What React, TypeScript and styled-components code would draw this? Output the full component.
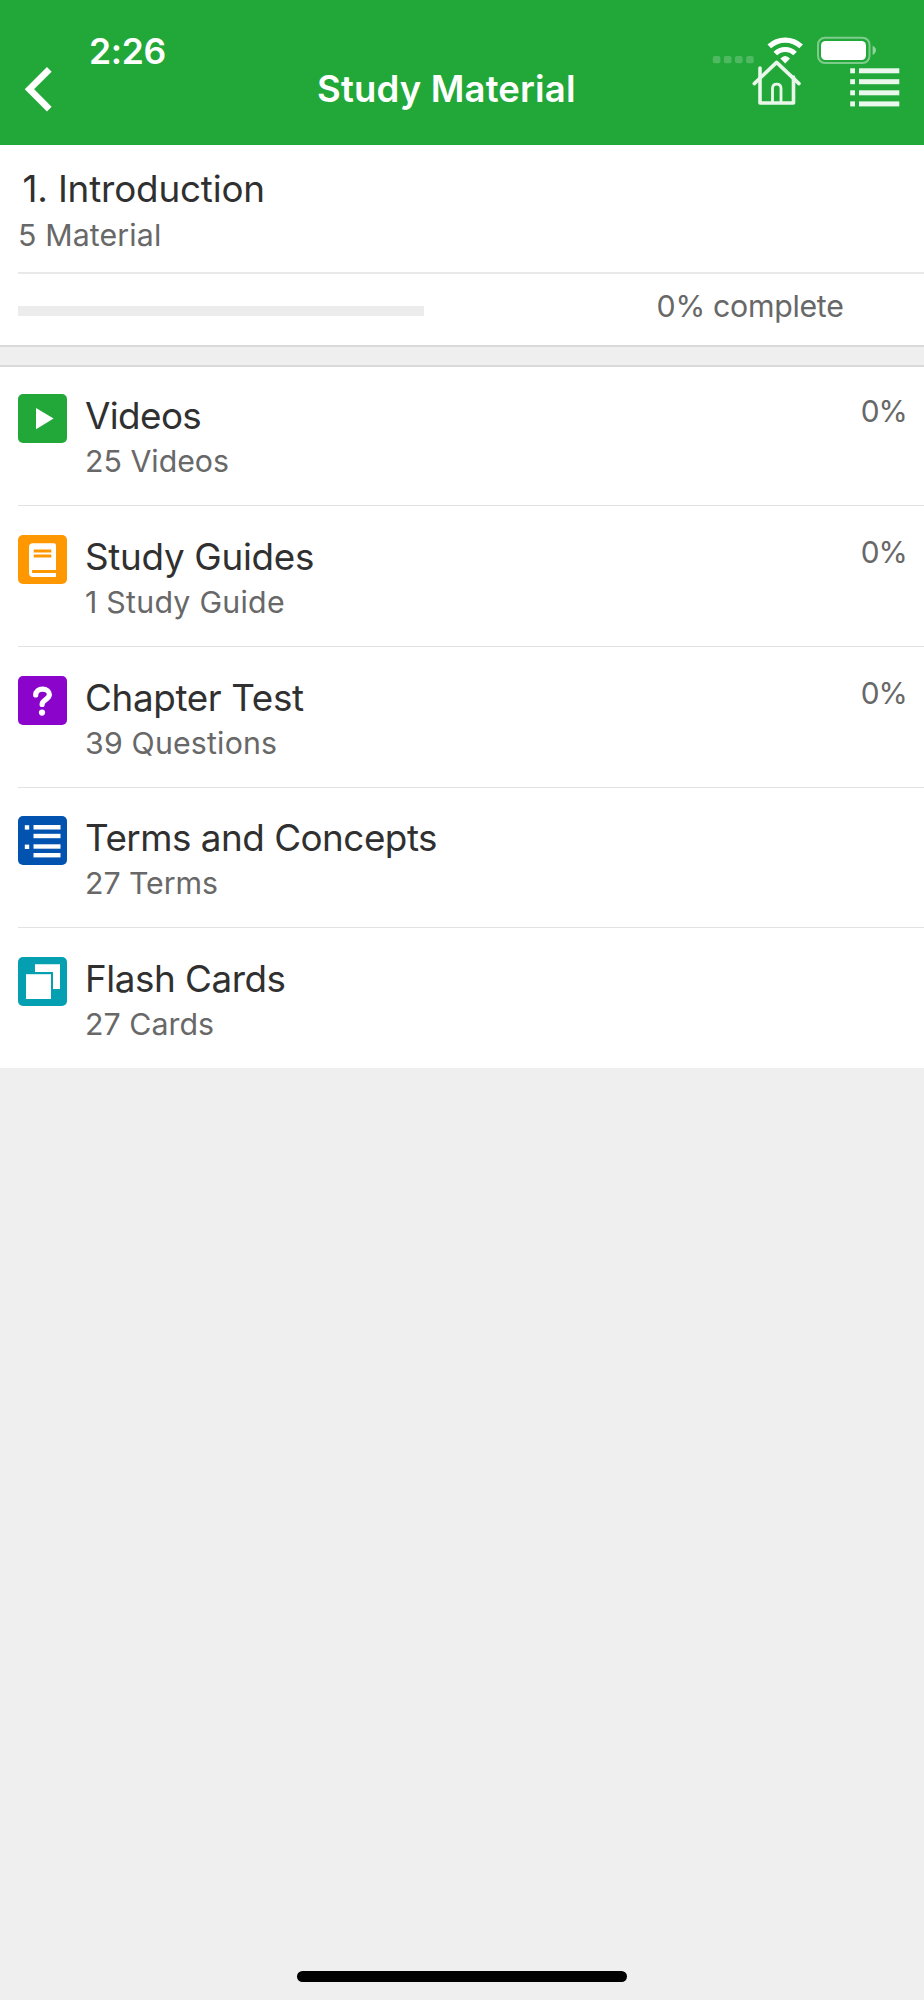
import React from 'react';
import styled, { createGlobalStyle } from 'styled-components';

const GlobalStyle = createGlobalStyle`
  *, *::before, *::after { box-sizing: border-box; }
  body {
    margin: 0;
    background: #efefef;
    font-family: Inter, 'Liberation Sans', sans-serif;
  }
`;

const Screen = styled.div`
  display: flex;
  flex-direction: column;
  width: 924px;
  height: 2000px;
  background: #efefef;
`;

const Header = styled.header`
  position: relative;
  flex: none;
  height: 144.8px;
  background: #22a839;
  color: #fff;
`;

const StatusBar = styled.div`
  position: absolute;
  top: 0;
  left: 0;
  right: 0;
  display: flex;
  justify-content: space-between;
  padding: 30px 46px 0 89px;
  pointer-events: none;
`;

const Clock = styled.span`
  margin-top: 0.6px;
  font-size: 35.5px;
  font-weight: 600;
  line-height: 41px;
  letter-spacing: -0.35px;
`;

const NavBar = styled.nav`
  display: flex;
  align-items: flex-start;
  height: 100%;
  padding: 56px 22px 0 22px;
`;

const NavButton = styled.button`
  display: block;
  padding: 0;
  border: 0;
  background: none;
  color: inherit;
`;

const NavTitle = styled.h1`
  flex: 1;
  margin: 11px 0 0 262px;
  font-size: 36.5px;
  font-weight: 600;
  line-height: 44px;
  letter-spacing: 0.16px;
  white-space: nowrap;
`;

const NavActions = styled.div`
  display: flex;
  gap: 46px;
`;

const Label = styled.div<{ $tracking?: number }>`
  white-space: nowrap;
  letter-spacing: ${({ $tracking = 0 }) => $tracking}px;
`;

const Title = styled(Label)`
  font-size: 36.8px;
  line-height: 44px;
  color: #303030;
`;

const Caption = styled(Label)`
  font-size: 30.3px;
  line-height: 38px;
  color: #686868;
`;

const Chapter = styled.section`
  flex: none;
  height: 202px;
  background: #fff;
  border-bottom: 2px solid #d9d9d9;
`;

const ChapterHeading = styled.div`
  height: 129.2px;
  margin-left: 18px;
  padding-top: 22px;
  border-bottom: 2px solid #e9e9e9;

  ${Title} { padding-left: 4.5px; }
  ${Caption} { margin-top: 5px; }
`;

const ProgressRow = styled.div`
  display: flex;
  align-items: flex-start;
  justify-content: space-between;
  padding: 13px 80.5px 0 18px;
`;

const ProgressTrack = styled.div`
  width: 406px;
  height: 10px;
  margin-top: 19px;
  background: #ececec;
`;

const MaterialList = styled.ul`
  flex: none;
  margin: 18px 0 0;
  padding: 0;
  list-style: none;
  background: #fff;
  border-top: 2px solid #d9d9d9;
`;

const MaterialRow = styled.li`
  display: flex;
  height: 140.6px;
  padding: 28.8px 17.5px 0 0;
  margin-left: 18px;

  &:first-child { height: 138.6px; padding-top: 27.3px; }
  & + & { border-top: 1px solid #e2e2e2; }
`;

const Badge = styled.svg`
  flex: none;
  width: 49px;
  height: 49px;
  border-radius: 5px;
`;

const MaterialText = styled.div`
  flex: 1;
  margin-left: 18px;

  ${Caption} { margin-top: 4px; }
`;

const Percent = styled(Caption)`
  margin-top: -1.8px;
  font-size: 29.8px;
`;

const HomeIndicator = styled.div`
  width: 330px;
  height: 11px;
  margin: auto auto 18px;
  border-radius: 6px;
  background: #000;
`;

const StatusIcons = () => (
  <svg width="168" height="40" viewBox="710 30 168 40" fill="#fff">
    <g opacity=".2">
      {[712.8, 723.9, 735, 746.1].map((x) => (
        <rect key={x} x={x} y="56" width="7.6" height="7.2" rx="2" />
      ))}
    </g>
    <g fill="none" stroke="#fff">
      <path d="M769.3 46.4A23.2 23.2 0 0 1 801.1 46.4" strokeWidth="5.3" />
      <path d="M775.3 53.6A14 14 0 0 1 795.1 53.6" strokeWidth="5" />
    </g>
    <path d="M785.2 63.6L780.4 58.6Q785.2 53.4 790 58.6Z" />
    <rect x="818" y="37.7" width="51.5" height="25.3" rx="7" fill="none" stroke="#fff" strokeWidth="2" opacity=".42" />
    <rect x="821" y="41" width="45" height="19" rx="4.5" />
    <path d="M872.6 45.5Q876 47.5 876 50.2Q876 53 872.6 55Z" opacity=".5" />
  </svg>
);

const BackIcon = () => (
  <svg width="33" height="58" viewBox="22 56 33 58" fill="none" stroke="#fff" strokeWidth="6.6">
    <path d="M49.3 69.3L29.4 89.2L49.3 109.1" />
  </svg>
);

const HomeIcon = () => (
  <svg width="52" height="52" viewBox="751 56 52 52" fill="none" stroke="#e9f7eb" strokeWidth="3.6" strokeLinejoin="round">
    <path d="M754.3 83.6L776.6 62.4L799 83.6" strokeLinecap="round" />
    <path d="M760 68V103H793.5V77" strokeLinecap="round" />
    <path d="M772.5 102V88.5Q772.5 84.2 776.7 84.2Q781 84.2 781 88.5V102" strokeWidth="2.8" />
  </svg>
);

const ListIcon = () => (
  <svg width="53" height="52" viewBox="849 56 53 52" fill="#ebf8ed">
    {[68.3, 79.2, 90.3, 101.4].map((y) => (
      <React.Fragment key={y}>
        <rect x="850.2" y={y} width="4.8" height="5" />
        <rect x="859" y={y} width="40.3" height="5" />
      </React.Fragment>
    ))}
  </svg>
);

const PlayGlyph = <path d="M18 14L35.6 24.6L18 35.3Z" fill="#fff" />;

const BookGlyph = (
  <>
    <path d="M38 10.5V35H14.2V38H38V42H15Q11 42 11 38V12Q11 8.3 15 8.3H36Q38 8.3 38 10.5Z" fill="#fff" />
    <path d="M38 35H14.2V36.2Q14.6 38 17 38H38Z" fill="#ff9800" />
    <rect x="15.7" y="14.5" width="17.6" height="3" fill="#ff9800" />
    <rect x="15.7" y="19.5" width="17.6" height="3" fill="#ff9800" />
  </>
);

const QuestionGlyph = (
  <>
    <path
      d="M17.7 19C17.7 15.4 20.6 13.2 24.5 13.2C28.6 13.2 31.4 15.4 31.4 18.6C31.4 23.4 24.1 23.8 24.1 28.4"
      fill="none"
      stroke="#fff"
      strokeWidth="5.2"
      strokeLinecap="round"
    />
    <circle cx="24" cy="36.6" r="3.1" fill="#fff" />
  </>
);

const TermsGlyph = (
  <g fill="#fff">
    <rect x="6.8" y="9.2" width="4.4" height="4.4" />
    <rect x="6.8" y="28.6" width="4.4" height="4.4" />
    <rect x="15.5" y="9" width="27" height="4.5" />
    <rect x="15.5" y="17.8" width="27" height="4.4" />
    <rect x="15.5" y="28.3" width="27" height="4.4" />
    <rect x="15.5" y="37" width="27" height="4.4" />
  </g>
);

const CardsGlyph = (
  <g fill="#fff">
    <path d="M17 7.3H42V32H35V15H17Z" />
    <rect x="8" y="17.2" width="25" height="24.8" />
  </g>
);

type Material = {
  title: string;
  titleTracking: number;
  caption: string;
  captionTracking: number;
  percent?: string;
  color: string;
  glyph: React.ReactNode;
};

const materials: Material[] = [
  { title: 'Videos', titleTracking: -0.6, caption: '25 Videos', captionTracking: 0, percent: '0%', color: '#22a839', glyph: PlayGlyph },
  { title: 'Study Guides', titleTracking: -0.3, caption: '1 Study Guide', captionTracking: 0.26, percent: '0%', color: '#ff9800', glyph: BookGlyph },
  { title: 'Chapter Test', titleTracking: -0.36, caption: '39 Questions', captionTracking: 0.18, percent: '0%', color: '#8a04cc', glyph: QuestionGlyph },
  { title: 'Terms and Concepts', titleTracking: -0.49, caption: '27 Terms', captionTracking: -0.06, color: '#0253b0', glyph: TermsGlyph },
  { title: 'Flash Cards', titleTracking: -0.46, caption: '27 Cards', captionTracking: 0.04, color: '#04a0b1', glyph: CardsGlyph },
];

export default function App() {
  return (
    <Screen>
      <GlobalStyle />
      <Header>
        <NavBar>
          <NavButton aria-label="Back"><BackIcon /></NavButton>
          <NavTitle>Study Material</NavTitle>
          <NavActions>
            <NavButton aria-label="Home"><HomeIcon /></NavButton>
            <NavButton aria-label="Menu"><ListIcon /></NavButton>
          </NavActions>
        </NavBar>
        <StatusBar>
          <Clock>2:26</Clock>
          <StatusIcons />
        </StatusBar>
      </Header>

      <Chapter>
        <ChapterHeading>
          <Title $tracking={-0.17}>1. Introduction</Title>
          <Caption $tracking={0.12}>5 Material</Caption>
        </ChapterHeading>
        <ProgressRow>
          <ProgressTrack />
          <Caption $tracking={-0.3}>0% complete</Caption>
        </ProgressRow>
      </Chapter>

      <MaterialList>
        {materials.map((m) => (
          <MaterialRow key={m.title}>
            <Badge viewBox="0 0 49 49">
              <rect width="49" height="49" fill={m.color} />
              {m.glyph}
            </Badge>
            <MaterialText>
              <Title $tracking={m.titleTracking}>{m.title}</Title>
              <Caption $tracking={m.captionTracking}>{m.caption}</Caption>
            </MaterialText>
            {m.percent && <Percent $tracking={-1.2}>{m.percent}</Percent>}
          </MaterialRow>
        ))}
      </MaterialList>

      <HomeIndicator />
    </Screen>
  );
}
